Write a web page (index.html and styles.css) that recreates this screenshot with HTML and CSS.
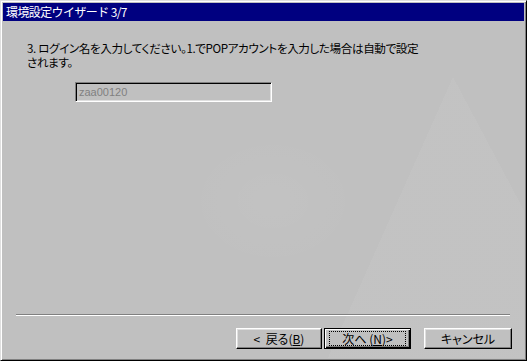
FILE: index.html
```html
<!DOCTYPE html>
<html lang="ja">
<head>
<meta charset="utf-8">
<title>環境設定ウイザード 3/7</title>
<link rel="stylesheet" href="styles.css">
</head>
<body>
<div class="window">
  <div class="titlebar"><span class="title">環境設定ウイザード 3/7</span></div>
  <div class="content">
    <p class="prompt">3. ログイン名を入力してください。1.でPOPアカウントを入力した場合は自動で設定<br>されます。</p>
    <div class="field">zaa00120</div>
    <div class="spacer"></div>
    <div class="separator"></div>
    <div class="buttons">
      <button class="btn back">&lt;&nbsp; 戻る(<u>B</u>)</button>
      <button class="btn next"><span class="focus">次へ (<u>N</u>)&gt;</span></button>
      <button class="btn cancel">キャンセル</button>
    </div>
  </div>
</div>
</body>
</html>
```
FILE: styles.css
```css
html, body {
  margin: 0;
  padding: 0;
}

body {
  width: 527px;
  height: 361px;
  overflow: hidden;
  background: #c0c0c0;
  font-family: "Noto Sans CJK JP", "Noto Sans", sans-serif;
  color: #000;
}

.window {
  box-sizing: border-box;
  width: 527px;
  height: 361px;
  display: flex;
  flex-direction: column;
  border: 1px solid;
  border-color: #dfdfdf #000 #000 #dfdfdf;
  padding: 2px;
  box-shadow: inset 1px 1px #fff, inset -1px -1px #808080;
  background: #c0c0c0;
}

.titlebar {
  height: 18px;
  flex: none;
  background: #000080;
  color: #fff;
  font-size: 12px;
  line-height: 18px;
  padding-left: 3px;
  white-space: nowrap;
  letter-spacing: -0.6px;
}

.content {
  flex: 1;
  display: flex;
  flex-direction: column;
  padding: 20px 0 9px 0;
  background:
    conic-gradient(from 152deg at 450px 56px, rgba(255,255,255,0.045) 0deg 52deg, transparent 52deg),
    radial-gradient(ellipse 90px 70px at 270px 180px, rgba(255,255,255,0.04), transparent),
    #c0c0c0;
}

.prompt {
  margin: 0 0 0 24px;
  font-size: 11.6px;
  line-height: 14px;
  letter-spacing: -0.4px;
  font-feature-settings: "palt";
  white-space: nowrap;
}

.field {
  box-sizing: border-box;
  margin: 13px 0 0 72px;
  width: 197px;
  height: 20px;
  border: 1px solid;
  border-color: #808080 #fff #fff #808080;
  box-shadow: inset 1px 1px #000, inset -1px -1px #dfdfdf;
  padding-left: 3px;
  font-family: "Liberation Sans", Arial, sans-serif;
  font-size: 11px;
  line-height: 18px;
  color: #808080;
}

.spacer {
  flex: 1;
}

.separator {
  margin: 0 14px 0 13px;
  height: 0;
  border-top: 1px solid #808080;
  border-bottom: 1px solid #fff;
}

.buttons {
  display: flex;
  justify-content: flex-end;
  margin-top: 12px;
  padding-right: 12px;
}

.btn {
  box-sizing: border-box;
  height: 21px;
  margin: 0;
  padding: 0;
  display: flex;
  align-items: center;
  justify-content: center;
  background: #c0c0c0;
  border: 1px solid;
  border-color: #fff #000 #000 #fff;
  box-shadow: inset -1px -1px #808080, inset 1px 1px #dfdfdf;
  font-family: "Noto Sans CJK JP", "Noto Sans", sans-serif;
  font-size: 12px;
  line-height: 13px;
  color: #000;
  font-feature-settings: "palt";
}

.back {
  width: 86px;
  margin-right: 2px;
}

.next {
  width: 87px;
  margin-right: 13px;
  border-color: #000;
  box-shadow: inset 1px 1px #fff, inset -1px -1px #000, inset -2px -2px #808080;
}

.focus {
  box-sizing: border-box;
  width: 77px;
  height: 15px;
  border: 1px dotted #000;
  display: flex;
  align-items: center;
  justify-content: center;
}

.cancel {
  width: 88px;
}
```
